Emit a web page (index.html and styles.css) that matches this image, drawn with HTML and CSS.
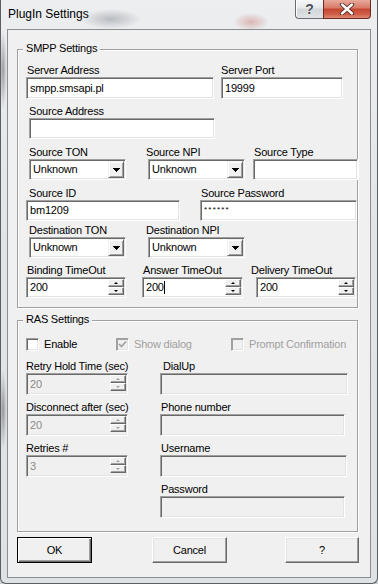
FILE: index.html
```html
<!DOCTYPE html>
<html>
<head>
<meta charset="utf-8">
<title>PlugIn Settings</title>
<link rel="stylesheet" href="styles.css">
</head>
<body>
<div class="window">
  <div class="titlebar">
    <span class="title">PlugIn Settings</span>
    <div class="caption-btns">
      <div class="cap-help">?</div>
      <div class="cap-close">
        <svg width="16" height="12" viewBox="0 0 16 12">
          <path d="M3 1.5 L13 10.5 M13 1.5 L3 10.5" stroke="#4a2a24" stroke-width="4.2" stroke-linecap="round" fill="none"/>
          <path d="M3 1.5 L13 10.5 M13 1.5 L3 10.5" stroke="#fff" stroke-width="2.4" stroke-linecap="round" fill="none"/>
        </svg>
      </div>
    </div>
  </div>

  <div class="client">
    <div class="group smpp">
      <span class="legend">SMPP Settings</span>

      <div class="row r1">
        <div class="field f-saddr"><label class="pl1">Server Address</label><div class="edit h22">smpp.smsapi.pl</div></div>
        <div class="field f-sport"><label>Server Port</label><div class="edit h22">19999</div></div>
      </div>

      <div class="row r2">
        <div class="field f-srcaddr"><label>Source Address</label><div class="edit"></div></div>
      </div>

      <div class="row r3">
        <div class="field f-ton"><label>Source TON</label><div class="edit combo"><span class="val">Unknown</span><span class="dd"><svg width="7" height="4" viewBox="0 0 7 4"><polygon points="0,0 7,0 3.5,4" fill="#000"/></svg></span></div></div>
        <div class="field f-npi"><label>Source NPI</label><div class="edit combo npi-box"><span class="val">Unknown</span><span class="dd"><svg width="7" height="4" viewBox="0 0 7 4"><polygon points="0,0 7,0 3.5,4" fill="#000"/></svg></span></div></div>
        <div class="field f-stype"><label class="pl1">Source Type</label><div class="edit"></div></div>
      </div>

      <div class="row r4">
        <div class="field f-sid"><label class="pl3">Source ID</label><div class="edit">bm1209</div></div>
        <div class="field f-spass"><label class="pl1">Source Password</label><div class="edit pass">******</div></div>
      </div>

      <div class="row r5">
        <div class="field f-ton"><label>Destination TON</label><div class="edit combo"><span class="val">Unknown</span><span class="dd"><svg width="7" height="4" viewBox="0 0 7 4"><polygon points="0,0 7,0 3.5,4" fill="#000"/></svg></span></div></div>
        <div class="field f-npi"><label>Destination NPI</label><div class="edit combo npi-box"><span class="val">Unknown</span><span class="dd"><svg width="7" height="4" viewBox="0 0 7 4"><polygon points="0,0 7,0 3.5,4" fill="#000"/></svg></span></div></div>
      </div>

      <div class="row r6">
        <div class="field f-bind"><label class="pl1">Binding TimeOut</label><div class="edit spinedit"><span class="val">200</span><span class="spin"><span class="sb"><i class="up"></i></span><span class="sb"><i class="down"></i></span></span></div></div>
        <div class="field f-ans"><label class="pl1">Answer TimeOut</label><div class="edit spinedit"><span class="val">200<b class="caret"></b></span><span class="spin"><span class="sb"><i class="up"></i></span><span class="sb"><i class="down"></i></span></span></div></div>
        <div class="field f-del"><label>Delivery TimeOut</label><div class="edit spinedit del-box"><span class="val">200</span><span class="spin"><span class="sb"><i class="up"></i></span><span class="sb"><i class="down"></i></span></span></div></div>
      </div>
    </div>

    <div class="group ras">
      <span class="legend">RAS Settings</span>

      <div class="checks">
        <div class="cbitem ci1"><span class="check"></span><span class="cbtext">Enable</span></div>
        <div class="cbitem ci2 disabled"><span class="check dis"><svg width="9" height="9" viewBox="0 0 9 9"><path d="M1 4 L3.5 6.5 L8 1.5" stroke="#a0a0a0" stroke-width="1.7" fill="none"/></svg></span><span class="cbtext">Show dialog</span></div>
        <div class="cbitem ci3 disabled"><span class="check dis"></span><span class="cbtext">Prompt Confirmation</span></div>
      </div>

      <div class="cols">
        <div class="col col-left">
          <div class="field"><label>Retry Hold Time (sec)</label><div class="edit spinedit disedit h22"><span class="val">20</span><span class="spin dspin"><span class="sb"><i class="up"></i></span><span class="sb"><i class="down"></i></span></span></div></div>
          <div class="field"><label>Disconnect after (sec)</label><div class="edit spinedit disedit h22"><span class="val">20</span><span class="spin dspin"><span class="sb"><i class="up"></i></span><span class="sb"><i class="down"></i></span></span></div></div>
          <div class="field"><label>Retries #</label><div class="edit spinedit disedit h22"><span class="val">3</span><span class="spin dspin"><span class="sb"><i class="up"></i></span><span class="sb"><i class="down"></i></span></span></div></div>
        </div>
        <div class="col col-right">
          <div class="field"><label class="pl3">DialUp</label><div class="edit disedit h22 w188"></div></div>
          <div class="field"><label class="pl1">Phone number</label><div class="edit disedit h22 w185"></div></div>
          <div class="field"><label class="pl1">Username</label><div class="edit disedit h22 w187"></div></div>
          <div class="field"><label class="pl1">Password</label><div class="edit disedit h22 w185"></div></div>
        </div>
      </div>
    </div>

    <div class="buttons">
      <div class="btn default b-ok">OK</div>
      <div class="btn b-cancel">Cancel</div>
      <div class="btn b-help">?</div>
    </div>
  </div>
</div>
</body>
</html>
```

FILE: styles.css
```css
* { box-sizing: border-box; }
html, body { margin: 0; padding: 0; }
body {
  width: 378px;
  height: 584px;
  overflow: hidden;
  background: #c9ced4;
  font-family: "Liberation Sans", Arial, sans-serif;
  font-size: 11px;
  letter-spacing: -0.2px;
  color: #000;
}

.window {
  width: 378px;
  height: 584px;
  border: 1px solid #5b6067;
  border-top: 0;
  border-radius: 0 0 6px 6px;
  padding: 0 6px;
  display: flex;
  flex-direction: column;
  background:
    radial-gradient(ellipse 30px 10px at 110px 19px, rgba(90,95,105,0.35), transparent),
    radial-gradient(ellipse 18px 9px at 250px 22px, rgba(190,80,70,0.35), transparent),
    radial-gradient(ellipse 4px 40px at 2px 70px, rgba(60,60,60,0.45), transparent),
    radial-gradient(ellipse 4px 40px at 2px 410px, rgba(60,60,60,0.45), transparent),
    linear-gradient(#eceef0, #e2e5e8 40%, #dfe2e5);
}

/* title bar */
.titlebar {
  height: 29px;
  display: flex;
  align-items: flex-start;
  flex: none;
}
.title {
  padding: 7px 0 0 1px;
  font-size: 12px;
  line-height: 14px;
  letter-spacing: 0;
  color: #000;
}
.caption-btns {
  margin-left: auto;
  display: flex;
}
.cap-help {
  width: 28px;
  height: 19px;
  border: 1px solid #6a6e74;
  border-top: 0;
  border-right: 0;
  border-radius: 0 0 0 4px;
  background: linear-gradient(#f6f7f8, #e6e8ea 45%, #d3d6d9 50%, #e0e3e6);
  box-shadow: inset 1px 0 #fff;
  display: flex;
  align-items: center;
  justify-content: center;
  font-weight: bold;
  font-size: 14px;
  color: #4a4e54;
  text-shadow: 0 0 1px #fff, 0 0 1px #fff;
  letter-spacing: 0;
  line-height: 14px;
}
.cap-close {
  width: 48px;
  height: 19px;
  border: 1px solid #6d2a20;
  border-top: 0;
  border-radius: 0 0 4px 0;
  background: linear-gradient(#e9a99b, #d77a66 45%, #c4452f 50%, #d2604a 80%, #dd8a74);
  display: flex;
  align-items: center;
  justify-content: center;
}

/* client */
.client {
  height: 549px;
  border: 1px solid #8a8e93;
  background: #f0f0f0;
  flex: none;
}

/* group boxes */
.group {
  margin-left: 9px;
  width: 341px;
  border: 1px solid #a0a0a0;
  box-shadow: inset 1px 1px #fff, 1px 1px #fff;
}
.smpp { margin-top: 19px; padding-bottom: 9px; }
.ras { margin-top: 12px; padding-bottom: 13px; }
.legend {
  display: block;
  width: max-content;
  margin: -8px 0 0 5px;
  padding: 0 3px;
  background: #f0f0f0;
  line-height: 13px;
}

.row { display: flex; align-items: flex-start; }
.r1 { margin-top: 9px; }
.r2 { margin-top: 6px; }
.r3 { margin-top: 7px; }
.r4 { margin-top: 7px; }
.r5 { margin-top: 3px; }
.r6 { margin-top: 6px; }

.field { display: flex; flex-direction: column; flex: none; }
label {
  display: block;
  line-height: 13px;
  height: 13px;
  white-space: nowrap;
}
.pl1 { padding-left: 1px; }
.pl3 { padding-left: 3px; }

/* field placement (group content starts at x=18) */
.f-saddr { margin-left: 8px; width: 188px; }
.f-sport { margin-left: 7px; width: 122px; }
.f-srcaddr { margin-left: 11px; width: 186px; }
.f-ton { margin-left: 11px; width: 97px; }
.f-npi { margin-left: 20px; width: 99px; }
.npi-box { margin-left: 2px; width: 97px; }
.f-stype { margin-left: 8px; width: 105px; }
.f-sid { margin-left: 8px; width: 154px; }
.f-spass { margin-left: 20px; width: 157px; }
.f-bind { margin-left: 8px; width: 100px; }
.f-ans { margin-left: 16px; width: 101px; }
.f-del { margin-left: 8px; width: 105px; }
.del-box { margin-left: 5px; width: 100px; }

/* edit controls */
.edit {
  height: 21px;
  background: #fff;
  border: 1px solid;
  border-color: #a0a0a0 #fff #fff #a0a0a0;
  box-shadow: inset 1px 1px #696969, inset -1px -1px #e3e3e3;
  padding: 0 0 0 3px;
  display: flex;
  align-items: center;
  line-height: 13px;
  white-space: nowrap;
  overflow: hidden;
}
.h22 { height: 22px; }
.pass {
  align-items: flex-start;
  padding-top: 5px;
  font-size: 8px;
  line-height: 8px;
  letter-spacing: 1.2px;
}

.combo .val, .spinedit .val { flex: 1; }
.dd {
  width: 16px;
  height: 17px;
  margin: 0 1px 0 0;
  background: #f0f0f0;
  border: 1px solid;
  border-color: #f0f0f0 #696969 #696969 #f0f0f0;
  box-shadow: inset 1px 1px #fff, inset -1px -1px #a0a0a0;
  display: flex;
  align-items: center;
  justify-content: center;
  flex: none;
}
.dd svg { display: block; shape-rendering: crispEdges; }

.caret {
  display: inline-block;
  width: 1px;
  height: 13px;
  background: #000;
  vertical-align: top;
}

.spin {
  display: flex;
  flex-direction: column;
  align-self: flex-start;
  margin: 1px 1px 0 0;
  flex: none;
}
.sb {
  width: 16px;
  height: 8px;
  background: #f0f0f0;
  border: 1px solid;
  border-color: #fff #696969 #696969 #fff;
  box-shadow: inset -1px -1px #a0a0a0;
  display: flex;
  align-items: center;
  justify-content: center;
}
.sb i {
  display: block;
  width: 0;
  height: 0;
  border-left: 2px solid transparent;
  border-right: 2px solid transparent;
}
.sb i.up { border-bottom: 2px solid #000; }
.sb i.down { border-top: 2px solid #000; }
.dspin .sb i.up { border-bottom-color: #a0a0a0; }
.dspin .sb i.down { border-top-color: #a0a0a0; }

.disedit {
  background: #f0f0f0;
  color: #8a8a8a;
}

/* checkboxes */
.checks {
  margin-top: 12px;
  display: flex;
  align-items: center;
  height: 13px;
}
.cbitem { display: flex; align-items: center; flex: none; }
.ci1 { margin-left: 8px; width: 90px; }
.ci2 { width: 115px; }
.check {
  width: 13px;
  height: 13px;
  background: #fff;
  border: 1px solid;
  border-color: #a0a0a0 #fff #fff #a0a0a0;
  box-shadow: inset 1px 1px #696969, inset -1px -1px #e3e3e3;
  display: flex;
  align-items: center;
  justify-content: center;
  flex: none;
}
.check.dis {
  background: #f0f0f0;
  box-shadow: inset 1px 1px #a0a0a0, inset -1px -1px #e3e3e3;
}
.check svg { display: block; }
.cbtext { margin-left: 5px; line-height: 13px; }
.disabled .cbtext { color: #a0a0a0; }

/* RAS columns */
.cols { display: flex; margin-top: 9px; }
.col { display: flex; flex-direction: column; gap: 6px; }
.col-left { margin-left: 8px; width: 102px; }
.col-right { margin-left: 32px; width: 188px; }
.w188 { width: 188px; }
.w185 { width: 185px; }
.w187 { width: 187px; }

/* buttons */
.buttons { display: flex; margin-top: 5px; }
.btn {
  height: 26px;
  background: #f0f0f0;
  border: 1px solid;
  border-color: #fff #696969 #696969 #fff;
  box-shadow: inset -1px -1px #a0a0a0, inset 1px 1px #e3e3e3;
  display: flex;
  align-items: center;
  justify-content: center;
  flex: none;
}
.btn.default {
  border: 1px solid #000;
  box-shadow: inset 1px 1px #fff, inset -1px -1px #696969, inset -2px -2px #a0a0a0;
}
.b-ok { margin-left: 9px; width: 75px; }
.b-cancel { margin-left: 60px; width: 75px; }
.b-help { margin-left: 58px; width: 74px; }
```
